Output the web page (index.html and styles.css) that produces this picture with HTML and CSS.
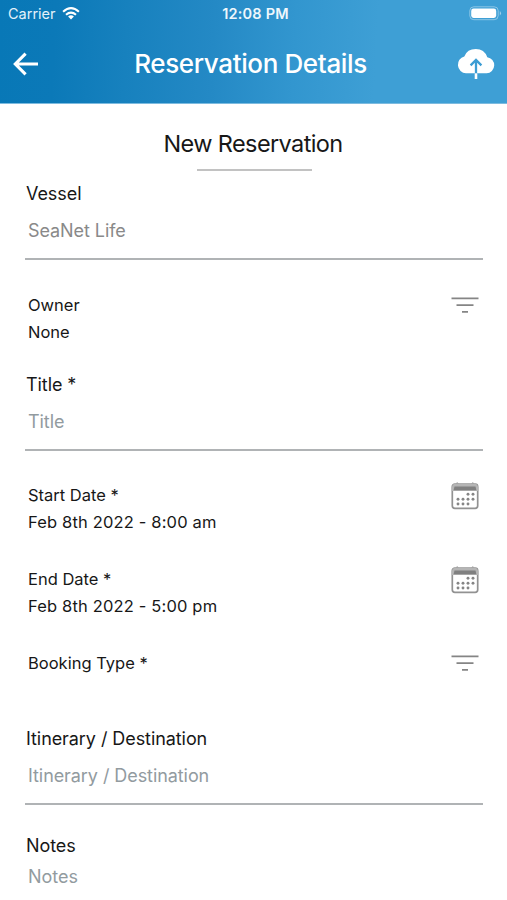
FILE: index.html
```html
<!DOCTYPE html>
<html lang="en">
<head>
<meta charset="utf-8">
<title>Reservation Details</title>
<link rel="stylesheet" href="styles.css">
</head>
<body>
<svg class="defs" width="0" height="0" aria-hidden="true">
  <symbol id="filter" viewBox="0 0 28 18">
    <path d="M.5 2.3H27.5M5.5 9.1H22.5M11 15.9H17" fill="none" stroke="#858585" stroke-width="1.7"/>
  </symbol>
  <symbol id="calendar" viewBox="0 0 28 28">
    <path d="M4.5 2.5 6.2.6 8 2.5M20 2.5 21.8.6 23.5 2.5" fill="#999" stroke="#999" stroke-width=".8"/>
    <rect x="1.3" y="2.2" width="25.4" height="24.2" rx="2.6" fill="#fff" stroke="#929292" stroke-width="1.7"/>
    <path d="M.8 9V5.5Q1.5 1.6 5 1.6H23Q26.5 1.6 27.2 5.5V9Z" fill="#b5b5b5"/>
    <path d="M3.5 4.6H24.5L25.4 8.2H2.6Z" fill="#808080"/>
    <g fill="#858585">
      <circle cx="17" cy="12.3" r="1.45"/><circle cx="22" cy="12.3" r="1.45"/>
      <circle cx="7" cy="17.2" r="1.45"/><circle cx="12" cy="17.2" r="1.45"/><circle cx="17" cy="17.2" r="1.45"/><circle cx="22" cy="17.2" r="1.45"/>
      <circle cx="7" cy="22" r="1.45"/><circle cx="12" cy="22" r="1.45"/><circle cx="17" cy="22" r="1.45"/>
    </g>
  </symbol>
</svg>
<header class="header">
  <div class="status">
    <div class="carrier"><span>Carrier</span>
      <svg width="18" height="13" viewBox="0 0 18 13" fill="none" stroke="#fff" stroke-width="2.1">
        <path d="M1.1 4.7Q9-2.3 16.9 4.7M4 7.7Q9 3.4 14 7.7"/><path d="M9 12.4 6.1 9.4Q9 7.2 11.9 9.4Z" fill="#fff" stroke="none"/>
      </svg>
    </div>
    <div class="clock">12:08 PM</div>
    <svg class="battery" width="33" height="15" viewBox="0 0 33 15">
      <rect x=".8" y=".8" width="28.4" height="12.9" rx="4" fill="none" stroke="#fff" stroke-opacity=".4" stroke-width="1"/>
      <rect x="2.2" y="2.6" width="25" height="9.3" rx="2.3" fill="#fff"/>
      <path d="M30.8 5Q33.2 7.2 30.8 9.5Z" fill="#fff" fill-opacity=".5"/>
    </svg>
  </div>
  <div class="nav">
    <svg class="back" width="26" height="24" viewBox="0 0 26 24" fill="none" stroke="#fff" stroke-width="3.1">
      <path d="M26 12H3.2M13.6 1.7 3.3 12 13.6 22.3"/>
    </svg>
    <h1 class="nav-title">Reservation Details</h1>
    <svg class="upload" width="38" height="32" viewBox="0 0 38 32">
      <path d="M9 25.3A8.6 8.6 0 0 1 7.3 8.4Q10.2 1 18.8 1T30.3 9.2A8.1 8.1 0 0 1 29.6 25.3Z" fill="#fff"/>
      <path d="M19 26V12.5M13.6 17.4 19 12 24.4 17.4" fill="none" stroke="#3c9dd4" stroke-width="2.3"/>
      <path d="M19 25.3V31" stroke="#fff" stroke-width="2.6"/>
    </svg>
  </div>
</header>
<main class="form">
  <h2 class="heading"><span>New Reservation</span></h2>
  <section class="field">
    <div class="label">Vessel</div>
    <div class="input filled">SeaNet Life</div>
  </section>
  <section class="picker owner">
    <div class="picker-text"><div>Owner</div><div>None</div></div>
    <svg class="filter" width="28" height="18"><use href="#filter"/></svg>
  </section>
  <section class="field">
    <div class="label">Title *</div>
    <div class="input">Title</div>
  </section>
  <section class="picker date">
    <div class="picker-text"><div>Start Date *</div><div class="value">Feb 8th 2022 - 8:00 am</div></div>
    <svg class="calendar" width="28" height="28"><use href="#calendar"/></svg>
  </section>
  <section class="picker date">
    <div class="picker-text"><div>End Date *</div><div class="value">Feb 8th 2022 - 5:00 pm</div></div>
    <svg class="calendar" width="28" height="28"><use href="#calendar"/></svg>
  </section>
  <section class="picker booking">
    <div class="picker-text"><div>Booking Type *</div></div>
    <svg class="filter" width="28" height="18"><use href="#filter"/></svg>
  </section>
  <section class="field">
    <div class="label">Itinerary / Destination</div>
    <div class="input">Itinerary / Destination</div>
  </section>
  <section class="notes">
    <div class="label">Notes</div>
    <div class="notes-input">Notes</div>
  </section>
</main>
</body>
</html>
```

FILE: styles.css
```css
* { box-sizing: border-box; }
body {
  margin: 0;
  height: 900px;
  overflow: hidden;
  background: #fff;
  color: #171717;
  font-family: Inter, "Liberation Sans", sans-serif;
}
svg { display: block; flex: none; }
.defs { position: absolute; }

.header {
  height: 104px;
  color: #fff;
  background: linear-gradient(93deg, #0878b7 0%, #0b79b8 11%, #1781be 25%, #2489c5 42%, #3296cf 58%, #3e9fd5 74%, #3e9fd5 100%);
  border-bottom: 1px solid #7dbbdf;
}
.status {
  display: grid;
  grid-template-columns: 1fr auto 1fr;
  height: 27px;
  padding: 0 5px 0 8px;
  align-items: center;
}
.carrier { display: flex; gap: 6px; align-items: center; font-size: 14.5px; color: #e3f1fa; }
.clock { padding-left: 1px; font-size: 14.5px; font-weight: 600; letter-spacing: 0.2px; color: #eef7fc; }
.battery { justify-self: end; }
.nav {
  display: flex;
  align-items: center;
  justify-content: space-between;
  height: 74px;
  padding: 0 12px;
}
.nav-title { margin: 0 0 0 6px; font-size: 26px; line-height: 30px; font-weight: 500; letter-spacing: -0.37px; white-space: nowrap; }

.form { padding: 22px 24px 0 25px; }
.heading {
  width: 115px;
  height: 45px;
  margin: 0 auto 11px 172px;
  border-bottom: 2px solid #c2c2c2;
  display: flex;
  justify-content: center;
  font-size: 23.5px;
  line-height: 35px;
  font-weight: 400;
  letter-spacing: -0.6px;
  white-space: nowrap;
}
.heading span { margin-right: 3px; }
.field { height: 78px; border-bottom: 2px solid #b0b3b5; }
.label { padding-left: 1px; font-size: 18px; line-height: 24px; height: 24px; letter-spacing: -0.07px; }
.input { margin: 13px 0 0 3px; font-size: 18px; line-height: 24px; letter-spacing: -0.07px; color: #929b9f; }
.filled { color: #898989; }
.picker {
  display: flex;
  justify-content: space-between;
  padding: 0 4px 0 3px;
  font-size: 16.5px;
  line-height: 27px;
}
.value { letter-spacing: 0.16px; }
.owner { height: 113px; padding-top: 32px; }
.date { height: 84px; }
.field + .date { height: 115px; padding-top: 31px; }
.filter { margin-top: 4px; }
.booking { height: 77px; }
.notes { padding-top: 29px; }
.notes-input { margin: 7px 0 0 3px; font-size: 18px; line-height: 24px; color: #929b9f; }
```
